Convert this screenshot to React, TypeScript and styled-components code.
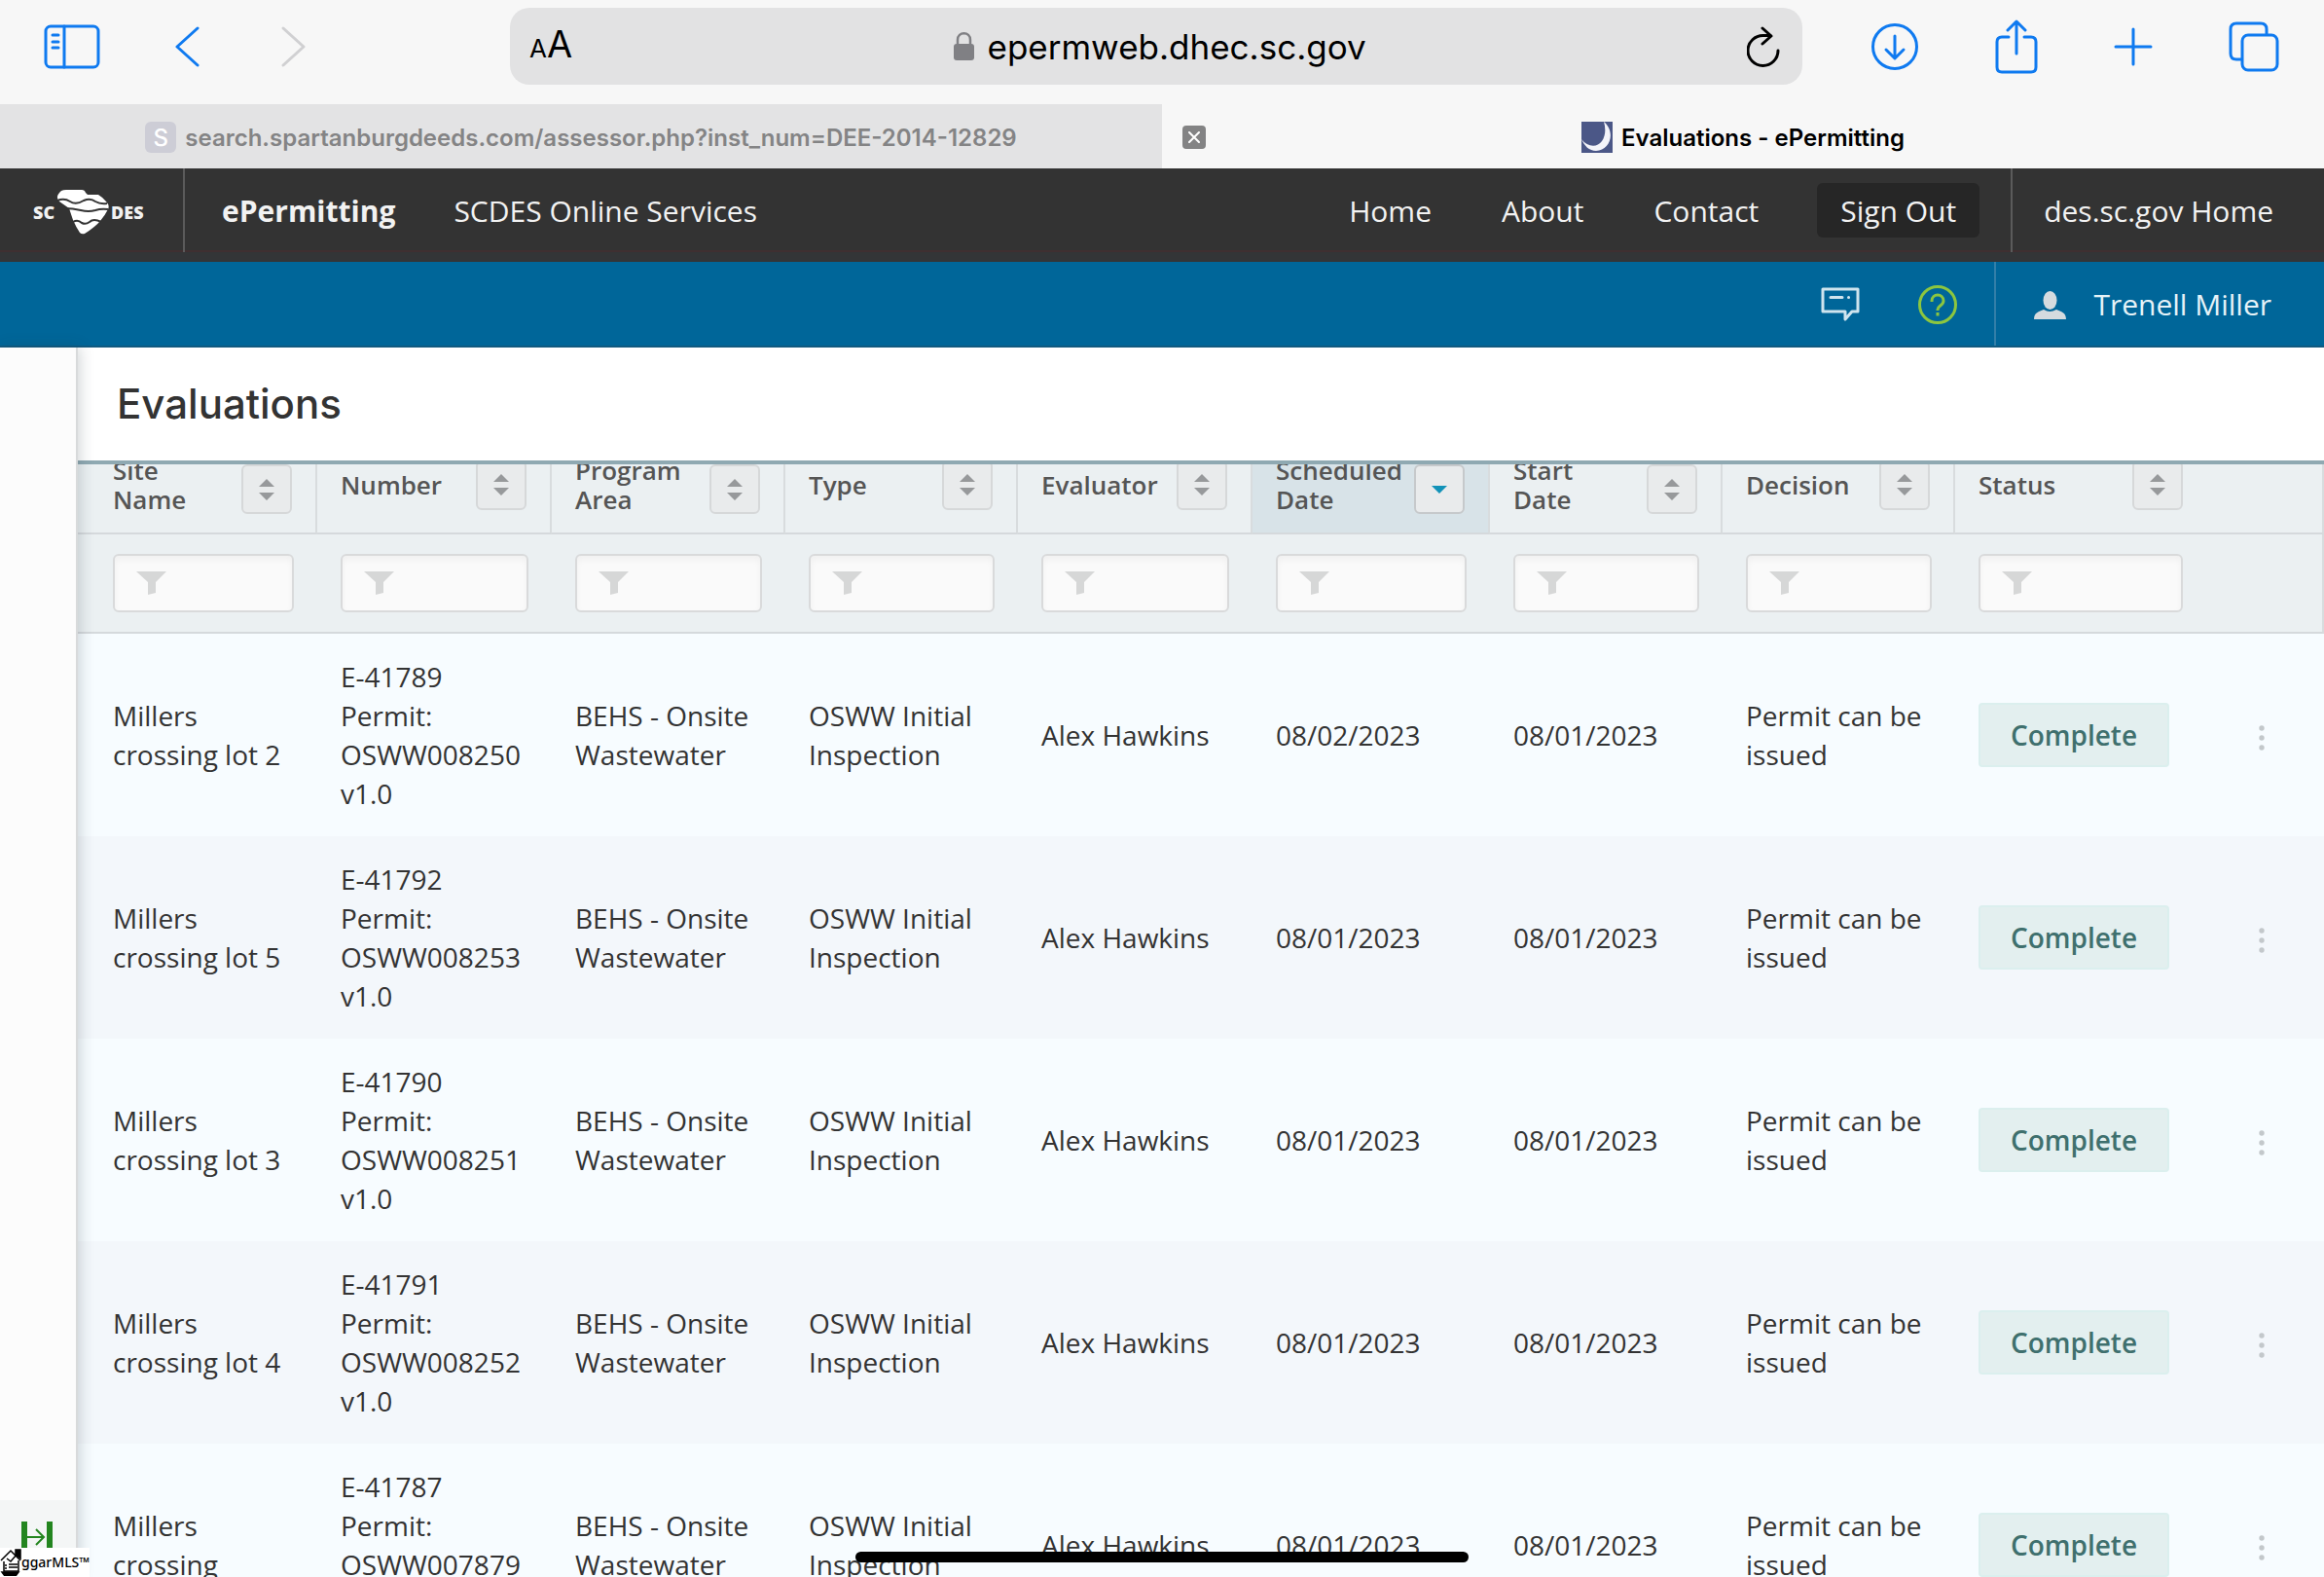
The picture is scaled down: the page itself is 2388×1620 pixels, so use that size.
import React, { useLayoutEffect, useRef } from "react";
import styled, { createGlobalStyle, css } from "styled-components";

const systemFont = `Inter, "Liberation Sans", sans-serif`;
const siteFont = `"Open Sans", "Noto Sans", sans-serif`;

const GlobalStyle = createGlobalStyle`
  *, *::before, *::after { box-sizing: border-box; }
  body { margin: 0; background: #fff; color: #333; font-family: ${siteFont}; }
  button, input { font: inherit; color: inherit; }
  button { border: 0; padding: 0; background: none; cursor: pointer; }
  a { color: inherit; text-decoration: none; }
  svg { display: block; flex: none; }
`;

const Screen = styled.div`
  display: flex;
  flex-direction: column;
  height: 100vh;
  overflow: hidden;
  position: relative;
`;

/* ---------- browser chrome ---------- */

const Toolbar = styled.div`
  flex: none;
  display: grid;
  grid-template-columns: 1fr 1328px 1fr;
  align-items: center;
  height: 107px;
  padding: 0 12px 12px 0;
  background: #f7f7f7;
  color: #0f7af0;
  font-family: ${systemFont};
`;

const ToolGroup = styled.div<{ $end?: boolean }>`
  display: flex;
  align-items: center;
  ${(p) =>
    p.$end
      ? css`
          justify-content: space-between;
          padding: 0 34px 0 70px;
        `
      : css`
          gap: 77px;
          padding-left: 45px;
        `}
`;

const ToolButton = styled.button<{ $muted?: boolean }>`
  display: flex;
  color: ${(p) => (p.$muted ? "#d0d0d2" : "inherit")};
`;

const AddressBar = styled.div`
  display: flex;
  align-items: center;
  justify-content: space-between;
  height: 79px;
  padding: 0 23px 0 20px;
  border-radius: 20px;
  background: #e2e2e3;
  color: #000;
`;

const TextSize = styled.button`
  display: flex;
  align-items: baseline;
  font-size: 26px;
  line-height: 40px;
`;

const LargeLetter = styled.span`
  font-size: 38px;
`;

const Address = styled.div`
  display: flex;
  align-items: center;
  gap: 14px;
  font-size: 35px;
  line-height: 48px;
`;

const Tabs = styled.div`
  flex: none;
  display: grid;
  grid-template-columns: 1fr 1fr;
  height: 66px;
  background: #f7f7f7;
  font-family: ${systemFont};
  font-size: 24px;
  font-weight: 600;
`;

const Tab = styled.div<{ $active?: boolean }>`
  position: relative;
  display: flex;
  align-items: center;
  justify-content: center;
  gap: 9px;
  padding-top: 2px;
  background: ${(p) => (p.$active ? "#f7f7f7" : "#e3e3e4")};
  color: ${(p) => (p.$active ? "#000" : "#848485")};
`;

const LetterIcon = styled.span`
  display: grid;
  place-items: center;
  width: 32px;
  height: 32px;
  border-radius: 6px;
  background: #cdcdd6;
  color: #fff;
  font-size: 24px;
  font-weight: 500;
`;

const CloseTab = styled.button`
  position: absolute;
  left: 21px;
  display: grid;
  place-items: center;
  width: 24px;
  height: 24px;
  border-radius: 4px;
  background: #838384;
  color: #fff;
`;

/* ---------- site header ---------- */

const SiteHeader = styled.header`
  flex: none;
  display: flex;
  height: 96px;
  border-bottom: 10px solid #333537;
  background: #333;
  color: #f2f2f2;
  font-size: 30px;
  line-height: 40px;
  box-shadow: inset 0 -2px #3f2f31;
`;

const LogoLink = styled.a`
  display: flex;
  align-items: center;
  gap: 2px;
  width: 190px;
  padding: 4px 0 0 34px;
  border-right: 2px solid #5b5b5b;
  font-size: 18px;
  font-weight: 800;
`;

const Brand = styled.a`
  display: flex;
  align-items: center;
  padding: 2px 60px 0 38px;
  font-weight: 700;
`;

const PlainLink = styled.a`
  display: flex;
  align-items: center;
  padding-top: 2px;
`;

const HeaderNav = styled.nav`
  display: flex;
  align-items: center;
  gap: 72px;
  margin-left: auto;
  padding-right: 60px;
`;

const SignOut = styled.button`
  align-self: center;
  height: 56px;
  margin-right: 32px;
  padding: 2px 24px 0;
  border-radius: 6px;
  background: #262626;
`;

const AgencyLink = styled.a`
  display: flex;
  align-items: center;
  padding: 2px 52px 0 32px;
  border-left: 2px solid #5b5b5b;
`;

const UserBar = styled.div`
  flex: none;
  display: flex;
  align-items: center;
  justify-content: flex-end;
  height: 88px;
  border-bottom: 2px solid #115a80;
  background: #006699;
  font-size: 30px;
  line-height: 40px;
`;

const BarButtons = styled.div`
  display: flex;
  align-items: center;
  gap: 60px;
  padding: 2px 38px 0 0;
`;

const BarButton = styled.button<{ $color: string }>`
  color: ${(p) => p.$color};
`;

const UserMenu = styled.button`
  display: flex;
  align-items: center;
  gap: 28px;
  align-self: stretch;
  padding: 2px 54px 0 39px;
  border-left: 2px solid #337fa8;
  color: #e6f3f8;
`;

/* ---------- page ---------- */

const Page = styled.div`
  flex: 1;
  min-height: 0;
  display: flex;
`;

const Rail = styled.aside`
  flex: none;
  display: flex;
  flex-direction: column;
  justify-content: flex-end;
  width: 80px;
  background: #fcfcfc;
  border-right: 2px solid #d8dadb;
  box-shadow: 2px 0 14px rgba(40, 60, 70, 0.22);
  z-index: 2;
`;

const ExpandRail = styled.button`
  display: flex;
  justify-content: center;
  height: 79px;
  padding: 22px 2px 0 0;
  background: #f4f6f6;
  color: #23851f;
`;

const Watermark = styled.div`
  position: absolute;
  left: 0;
  bottom: 0;
  z-index: 3;
  display: flex;
  align-items: center;
  width: 92px;
  height: 30px;
  background: #fff;
  color: #000;
  font: 500 14px/20px "Noto Sans", sans-serif;
`;

const Content = styled.main`
  flex: 1;
  min-width: 0;
  display: flex;
  flex-direction: column;
`;

const TitleBar = styled.div`
  flex: none;
  display: flex;
  align-items: center;
  height: 120px;
  padding-left: 40px;
  border-bottom: 4px solid #8fa9b2;
  background: #fff;
`;

const Title = styled.h1`
  margin: 0;
  font: 500 42px/52px ${systemFont};
`;

const Scroller = styled.div`
  flex: 1;
  min-height: 0;
  overflow: auto;
  scrollbar-width: none;
`;

const Grid = styled.table`
  width: 100%;
  table-layout: fixed;
  border-collapse: separate;
  border-spacing: 0;
  font-size: 28px;
  line-height: 40px;
`;

const Col = styled.col<{ $width: number }>`
  width: ${(p) => p.$width}px;
`;

const HeadCell = styled.th<{ $sorted?: boolean }>`
  height: 100px;
  padding: 19px 24px;
  border-right: 2px solid #d8dcde;
  border-bottom: 2px solid #d5d9dc;
  background: ${(p) => (p.$sorted ? "#d8e3e8" : "#ebf0f2")};
  color: #555;
  font-size: 26px;
  font-weight: 600;
  line-height: 30px;
  text-align: left;
  vertical-align: middle;
  &:first-child { padding-left: 36px; }
  &:nth-child(9) { border-right: 0; }
`;

const HeadContent = styled.div`
  display: flex;
  align-items: center;
  justify-content: space-between;
  gap: 12px;
`;

const SortButton = styled.button<{ $sorted?: boolean }>`
  flex: none;
  align-self: flex-end;
  display: grid;
  place-items: center;
  width: 52px;
  height: 51px;
  border: 2px solid ${(p) => (p.$sorted ? "#c6c9cb" : "#d6d8d9")};
  border-radius: 6px;
  background: #e9ebec;
  color: ${(p) => (p.$sorted ? "#1292b8" : "#97999b")};
`;

const FilterCell = styled.td`
  padding: 20px 24px;
  border-bottom: 2px solid #d5d9dc;
  background: #ebf0f2;
  &:first-child { padding-left: 36px; }
  &:last-child { border-right: 2px solid #d8dcde; }
`;

const FilterBox = styled.label`
  display: flex;
  align-items: center;
  gap: 10px;
  height: 60px;
  padding: 0 22px;
  border: 2px solid #d9dadb;
  border-radius: 6px;
  background: #fafafa;
  box-shadow: inset 0 4px 6px rgba(0, 0, 0, 0.04);
  color: #d6d7d7;
`;

const FilterInput = styled.input`
  flex: 1;
  min-width: 0;
  border: 0;
  padding: 0;
  background: transparent;
  color: #333;
  outline: none;
`;

const Row = styled.tr`
  background: #f7fcff;
  &:nth-child(even) { background: #f3f7fb; }
`;

const Cell = styled.td`
  height: 208px;
  padding: 24px 14px 24px 24px;
  vertical-align: middle;
  &:first-child { padding-left: 36px; }
`;

const Line = styled.span`
  display: block;
`;

const Badge = styled.span`
  display: inline-flex;
  align-items: center;
  justify-content: center;
  width: 196px;
  height: 66px;
  border: 2px solid #dbefee;
  border-radius: 4px;
  background: #e3efef;
  color: #3f706e;
  font-weight: 600;
  vertical-align: middle;
`;

const RowMenu = styled.button`
  display: block;
  margin-left: 30px;
  padding-top: 6px;
  color: #c3c8cb;
`;

const HomeIndicator = styled.div`
  position: absolute;
  left: 50%;
  bottom: 15px;
  z-index: 4;
  width: 630px;
  height: 11px;
  margin-left: -315px;
  border-radius: 6px;
  background: #000;
`;

/* ---------- icons ---------- */

const line = { fill: "none", stroke: "currentColor", strokeWidth: 3, strokeLinecap: "round", strokeLinejoin: "round" } as const;

const SidebarIcon = () => (
  <svg width="58" height="46" viewBox="0 0 58 46" {...line}>
    <rect x="2" y="2" width="54" height="42" rx="5" />
    <path d="M21 2v42M9 11h6M9 18h6M9 24h6" />
  </svg>
);
const Chevron = ({ flip }: { flip?: boolean }) => (
  <svg width="30" height="44" viewBox="0 0 30 44" {...line}>
    <path d={flip ? "M4 3l21 19L4 41" : "M23 3L2 22l21 19"} />
  </svg>
);
const LockIcon = () => (
  <svg width="21" height="30" viewBox="0 0 21 30">
    <rect x="0" y="12" width="21" height="17" rx="3" fill="#808084" />
    <path d="M4 13V8c0-9 13-9 13 0v5" fill="none" stroke="#808084" strokeWidth="2.5" />
  </svg>
);
const ReloadIcon = () => (
  <svg width="34" height="42" viewBox="0 0 34 42" {...line}>
    <path d="M32 25a15.500 15.500 0 1 1-15-15.500h7" />
    <path d="M16 2l9 8-9 8" />
  </svg>
);
const DownloadIcon = () => (
  <svg width="50" height="50" viewBox="0 0 50 50" {...line}>
    <circle cx="25" cy="25" r="22.500" />
    <path d="M25 14v22M16 28l9 9 9-9" />
  </svg>
);
const ShareIcon = () => (
  <svg width="44" height="56" viewBox="0 0 44 56" {...line}>
    <path d="M14 18H7q-5 0-5 5v26q0 5 5 5h30q5 0 5-5V23q0-5-5-5h-7" />
    <path d="M22 35V3M13 11l9-9 9 9" />
  </svg>
);
const PlusIcon = () => (
  <svg width="40" height="40" viewBox="0 0 40 40" {...line}>
    <path d="M20 2v36M2 20h36" />
  </svg>
);
const TabsIcon = () => (
  <svg width="52" height="52" viewBox="0 0 52 52" {...line}>
    <rect x="14" y="14" width="36" height="36" rx="6" />
    <path d="M13 39H8q-6 0-6-6V8q0-6 6-6h25q6 0 6 6v5" />
  </svg>
);
const CrossIcon = () => (
  <svg width="12" height="12" viewBox="0 0 12 12" {...line} strokeWidth={2}>
    <path d="M1 1l10 10M11 1L1 11" />
  </svg>
);
const MoonIcon = () => (
  <svg width="32" height="32" viewBox="0 0 32 32">
    <rect width="32" height="32" fill="#4b5787" />
    <path d="M23 0c13 11 6 30-8 30C8 30 3 25 0 18c6 8 16 9 21 2 4-6 4-13 2-20z" fill="#f4f4fa" />
  </svg>
);
const StateLogo = () => (
  <svg width="54" height="46" viewBox="0 0 54 46">
    <path
      d="M5 1Q7 0 10 0h16q3 0 4 3l2 2h11q5 3 8 7 4 4 2 8-3 6-8 12-5 6-16 13-3 1-5-1-4-6-7-13L13 19 3 12Q-2 7 5 1z"
      fill="#fff"
    />
    <g fill="none" stroke="#333" strokeWidth="2">
      <path d="M1 11q7-3 13 1t14-1q7-3 12 1 5 3 12 2" />
      <path d="M8 19q9 0 17 2t15 0q6-2 13-1" />
      <path d="M17 33q5-3 9 1 4 2 8-1 4-4 12 0" />
    </g>
  </svg>
);
const ChatIcon = () => (
  <svg width="40" height="36" viewBox="0 0 40 36" {...line}>
    <path d="M2 2h36v23h-6l-7 8v-8H2z" />
    <path d="M10 10.500h12M28.500 10.500h.1" />
  </svg>
);
const HelpIcon = () => (
  <svg width="40" height="40" viewBox="0 0 40 40" fill="none" stroke="currentColor" strokeWidth="3">
    <circle cx="20" cy="20" r="18.500" />
    <path d="M14 17v-1c0-8 12-8 12 0 0 5-6 5-6 9v1M20 28v3.500" />
  </svg>
);
const PersonIcon = () => (
  <svg width="33" height="29" viewBox="0 0 33 29" fill="#d5dbdf">
    <ellipse cx="16.500" cy="9.500" rx="7" ry="9.500" />
    <path d="M0 29c0-7 5-8 10-10q6 4 13 0c5 2 10 3 10 10z" />
  </svg>
);
const ExpandIcon = () => (
  <svg width="32" height="32" viewBox="0 0 32 32">
    <path d="M0 0h6v32H0zM26 0h6v32h-6z" fill="currentColor" />
    <path d="M6 16h17M15 8l8 8-8 8" fill="none" stroke="currentColor" strokeWidth="2" />
  </svg>
);
const SortIcon = ({ sorted }: { sorted?: boolean }) => (
  <svg width="16" height="22" viewBox="0 0 16 22" fill="currentColor">
    {sorted ? <path d="M0 7h16l-8 8z" /> : <path d="M0 8l8-8 8 8zM0 14h16l-8 8z" />}
  </svg>
);
const FunnelIcon = () => (
  <svg width="31" height="24" viewBox="0 0 31 24" fill="currentColor">
    <path d="M0 0h31L20 11v11l-8 2V11z" />
  </svg>
);
const DotsIcon = () => (
  <svg width="6" height="26" viewBox="0 0 6 26" fill="currentColor">
    <circle cx="3" cy="3" r="2.700" />
    <circle cx="3" cy="13" r="2.700" />
    <circle cx="3" cy="23" r="2.700" />
  </svg>
);
const HouseIcon = () => (
  <svg width="22" height="28" viewBox="0 0 22 28" fill="none" stroke="#000" strokeWidth="1.500">
    <path d="M1 12L11 2l10 10" />
    <path d="M16 1h5v9l-5-4z" fill="#000" />
    <path d="M4 13v10h15V12M7 10l4 3 6-7M5 17h2M9 16h9M5 20h2M9 19h9" />
    <path d="M2 24h17l-3 4H5z" fill="#000" />
  </svg>
);

/* ---------- data ---------- */

const columns = [
  { label: "Site Name", width: 246 },
  { label: "Number", width: 241 },
  { label: "Program Area", width: 240 },
  { label: "Type", width: 239 },
  { label: "Evaluator", width: 241 },
  { label: "Scheduled Date", width: 244, sorted: true },
  { label: "Start Date", width: 239 },
  { label: "Decision", width: 239 },
  { label: "Status", width: 258 },
];

const evaluations = [
  { site: "Millers crossing lot 2", id: "E-41789", permit: "OSWW008250", scheduled: "08/02/2023" },
  { site: "Millers crossing lot 5", id: "E-41792", permit: "OSWW008253", scheduled: "08/01/2023" },
  { site: "Millers crossing lot 3", id: "E-41790", permit: "OSWW008251", scheduled: "08/01/2023" },
  { site: "Millers crossing lot 4", id: "E-41791", permit: "OSWW008252", scheduled: "08/01/2023" },
  { site: "Millers crossing", id: "E-41787", permit: "OSWW007879", scheduled: "08/01/2023" },
];

const BrowserChrome = () => (
  <>
    <Toolbar>
      <ToolGroup>
        <ToolButton aria-label="Sidebar"><SidebarIcon /></ToolButton>
        <ToolButton aria-label="Back"><Chevron /></ToolButton>
        <ToolButton aria-label="Forward" $muted><Chevron flip /></ToolButton>
      </ToolGroup>
      <AddressBar>
        <TextSize aria-label="Text size">A<LargeLetter>A</LargeLetter></TextSize>
        <Address><LockIcon />epermweb.dhec.sc.gov</Address>
        <ToolButton aria-label="Reload"><ReloadIcon /></ToolButton>
      </AddressBar>
      <ToolGroup $end>
        <ToolButton aria-label="Downloads"><DownloadIcon /></ToolButton>
        <ToolButton aria-label="Share"><ShareIcon /></ToolButton>
        <ToolButton aria-label="New tab"><PlusIcon /></ToolButton>
        <ToolButton aria-label="All tabs"><TabsIcon /></ToolButton>
      </ToolGroup>
    </Toolbar>
    <Tabs>
      <Tab>
        <LetterIcon>S</LetterIcon>
        search.spartanburgdeeds.com/assessor.php?inst_num=DEE-2014-12829
      </Tab>
      <Tab $active>
        <CloseTab aria-label="Close tab"><CrossIcon /></CloseTab>
        <MoonIcon />
        Evaluations - ePermitting
      </Tab>
    </Tabs>
  </>
);

const EvaluationsTable = () => (
  <Grid>
    <colgroup>
      {columns.map((c) => <Col key={c.label} $width={c.width} />)}
      <Col $width={121} />
    </colgroup>
    <thead>
      <tr>
        {columns.map((c) => (
          <HeadCell key={c.label} scope="col" $sorted={c.sorted}>
            <HeadContent>
              {c.label}
              <SortButton aria-label={`Sort by ${c.label}`} $sorted={c.sorted}>
                <SortIcon sorted={c.sorted} />
              </SortButton>
            </HeadContent>
          </HeadCell>
        ))}
        <HeadCell />
      </tr>
      <tr>
        {columns.map((c) => (
          <FilterCell key={c.label}>
            <FilterBox>
              <FunnelIcon />
              <FilterInput type="text" aria-label={`Filter ${c.label}`} />
            </FilterBox>
          </FilterCell>
        ))}
        <FilterCell />
      </tr>
    </thead>
    <tbody>
      {evaluations.map((e) => (
        <Row key={e.id}>
          <Cell>{e.site}</Cell>
          <Cell>
            <Line>{e.id}</Line>
            <Line>Permit:</Line>
            <Line>{e.permit}</Line>
            <Line>v1.0</Line>
          </Cell>
          <Cell>BEHS - Onsite Wastewater</Cell>
          <Cell>OSWW Initial Inspection</Cell>
          <Cell>Alex Hawkins</Cell>
          <Cell>{e.scheduled}</Cell>
          <Cell>08/01/2023</Cell>
          <Cell>Permit can be issued</Cell>
          <Cell><Badge>Complete</Badge></Cell>
          <Cell><RowMenu aria-label={`Actions for ${e.id}`}><DotsIcon /></RowMenu></Cell>
        </Row>
      ))}
    </tbody>
  </Grid>
);

export default function App() {
  const scroller = useRef<HTMLDivElement>(null);

  // The list opens slightly scrolled, so the header row tucks under the title bar.
  useLayoutEffect(() => {
    if (scroller.current) scroller.current.scrollTop = 28;
  }, []);

  return (
    <Screen>
      <GlobalStyle />
      <BrowserChrome />
      <SiteHeader>
        <LogoLink href="#">SC<StateLogo />DES</LogoLink>
        <Brand href="#">ePermitting</Brand>
        <PlainLink href="#">SCDES Online Services</PlainLink>
        <HeaderNav>
          <PlainLink href="#">Home</PlainLink>
          <PlainLink href="#">About</PlainLink>
          <PlainLink href="#">Contact</PlainLink>
        </HeaderNav>
        <SignOut>Sign Out</SignOut>
        <AgencyLink href="#">des.sc.gov Home</AgencyLink>
      </SiteHeader>
      <UserBar>
        <BarButtons>
          <BarButton $color="#cfe4ee" aria-label="Messages"><ChatIcon /></BarButton>
          <BarButton $color="#8cc63f" aria-label="Help"><HelpIcon /></BarButton>
        </BarButtons>
        <UserMenu><PersonIcon />Trenell Miller</UserMenu>
      </UserBar>
      <Page>
        <Rail>
          <ExpandRail aria-label="Expand menu"><ExpandIcon /></ExpandRail>
        </Rail>
        <Content>
          <TitleBar><Title>Evaluations</Title></TitleBar>
          <Scroller ref={scroller}><EvaluationsTable /></Scroller>
        </Content>
      </Page>
      <Watermark><HouseIcon />ggarMLS™</Watermark>
      <HomeIndicator />
    </Screen>
  );
}
